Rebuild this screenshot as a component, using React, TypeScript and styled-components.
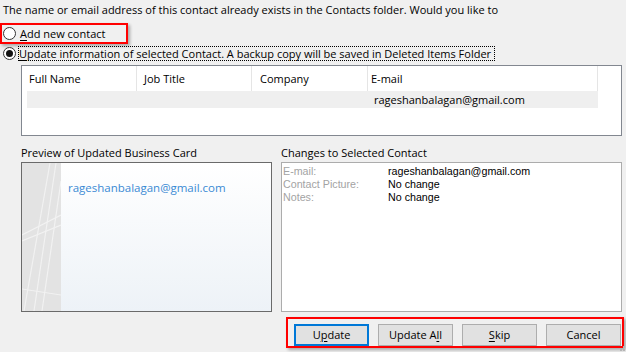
import React from "react";
import styled, { createGlobalStyle } from "styled-components";

const GlobalStyle = createGlobalStyle`
  html, body {
    margin: 0;
    padding: 0;
    background: #f0f0f0;
  }
`;

const Dialog = styled.div`
  position: relative;
  width: 626px;
  height: 352px;
  overflow: hidden;
  background: #f0f0f0;
  color: #000;
  font: 11px/16px "Open Sans", "Noto Sans", sans-serif;
  display: flex;
  flex-direction: column;
`;

const Prompt = styled.div`
  padding: 2px 0 0 3px;
  height: 16px;
  white-space: nowrap;
`;

const Highlight = styled.div<{ $w: number; $h: number }>`
  box-sizing: border-box;
  width: ${(p) => p.$w}px;
  height: ${(p) => p.$h}px;
  border: 2px solid #ff0000;
  box-shadow: 2px 2px 3px rgba(0, 0, 0, 0.3);
`;

const OptionRow = styled.label`
  display: flex;
  align-items: center;
  height: 17px;
  padding-left: 1px;
  white-space: nowrap;
`;

const SecondRow = styled(OptionRow)`
  margin-top: 2px;
  height: 15px;
  padding-left: 3px;
`;

const Radio = styled.span<{ $checked?: boolean }>`
  box-sizing: border-box;
  width: 13px;
  height: 13px;
  border-radius: 50%;
  border: 1px solid #333;
  background: #fff;
  display: flex;
  align-items: center;
  justify-content: center;
  flex: none;

  &::after {
    content: "";
    width: 7px;
    height: 7px;
    border-radius: 50%;
    background: ${(p) => (p.$checked ? "#111" : "transparent")};
  }
`;

const OptionText = styled.span<{ $focus?: boolean }>`
  margin-left: ${(p) => (p.$focus ? 2 : 3)}px;
  line-height: 13px;
  border: 1px dotted ${(p) => (p.$focus ? "#000" : "transparent")};
  padding: 0 ${(p) => (p.$focus ? 3 : 1)}px 0 0;
`;

const Key = styled.span`
  text-decoration: underline;
  text-underline-offset: 2px;
`;

const ListBox = styled.div`
  box-sizing: border-box;
  margin: 4px 0 0 21px;
  width: 601px;
  height: 71px;
  border: 1px solid #828790;
  background: #fff;
`;

const ListHeader = styled.div`
  display: grid;
  grid-template-columns: 115px 115px 116px 230px;
  height: 25px;
`;

const HeaderCell = styled.div<{ $pad: number }>`
  display: flex;
  align-items: center;
  padding-left: ${(p) => p.$pad}px;
  border-right: 1px solid #e5e5e5;
`;

const ListRow = styled.div`
  display: grid;
  grid-template-columns: 341px 230px;
  margin-left: 5px;
  width: 571px;
  height: 17px;
  background: #efefef;
  line-height: 17px;
`;

const RowCell = styled.div<{ $pad?: number }>`
  padding-left: ${(p) => p.$pad ?? 0}px;
`;

const LabelRow = styled.div`
  display: flex;
  margin-top: 10px;
  height: 16px;
  line-height: 14px;
`;

const SectionLabel = styled.div<{ $w: number; $ml: number }>`
  width: ${(p) => p.$w}px;
  margin-left: ${(p) => p.$ml}px;
`;

const Panels = styled.div`
  display: flex;
  gap: 9px;
  padding-left: 21px;
  height: 150px;
`;

const Card = styled.div`
  box-sizing: border-box;
  width: 251px;
  height: 150px;
  border: 1px solid #6a6a6a;
  display: flex;
  background: linear-gradient(#ffffff, #edf2f7);
`;

const CardStrip = styled.div`
  width: 39px;
  flex: none;
  background: #e3e3e3;
`;

const CardBody = styled.div`
  padding: 17px 0 0 7px;
  color: #3a8ad4;
  font-size: 11.5px;
`;

const ChangesBox = styled.div`
  box-sizing: border-box;
  width: 341px;
  height: 150px;
  border: 1px solid #acacac;
  background: #fff;
  padding: 2px 0 0 1px;
  font: 10.7px/13px "Liberation Sans", Arial, sans-serif;
  display: grid;
  grid-template-columns: 105px 1fr;
  align-content: start;
`;

const ChangeLabel = styled.div`
  color: #a3a3a3;
`;

const ChangeValue = styled.div`
  color: #000;
`;

const ButtonBar = styled(Highlight)`
  margin: 5px 0 0 286px;
  display: flex;
  gap: 9px;
  padding: 5px 0 0 6px;
`;

const Button = styled.button<{ $default?: boolean }>`
  box-sizing: border-box;
  width: 75px;
  height: 22px;
  padding: 0;
  background: #e1e1e1;
  border: ${(p) => (p.$default ? "2px solid #0078d7" : "1px solid #adadad")};
  font: inherit;
  line-height: 18px;
  color: #000;
`;

const Grip = styled.svg`
  position: absolute;
  right: 0;
  bottom: 0;
`;

const columns = [
  { name: "Full Name", pad: 7 },
  { name: "Job Title", pad: 7 },
  { name: "Company", pad: 8 },
  { name: "E-mail", pad: 3 },
];

const changes = [
  ["E-mail:", "rageshanbalagan@gmail.com"],
  ["Contact Picture:", "No change"],
  ["Notes:", "No change"],
];

const CardArt = () => (
  <svg width="39" height="148" viewBox="0 0 39 148">
    <g stroke="#f7f7f7" strokeWidth="1.2" fill="none" opacity="0.75">
      <line x1="34" y1="0" x2="12" y2="148" />
      <line x1="39" y1="18" x2="20" y2="148" />
      <line x1="28" y1="0" x2="2" y2="148" />
      <line x1="0" y1="72" x2="39" y2="52" />
      <line x1="0" y1="78" x2="39" y2="62" />
      <line x1="0" y1="126" x2="39" y2="132" />
    </g>
  </svg>
);

export default function App() {
  return (
    <>
      <GlobalStyle />
      <Dialog>
        <Prompt>
          The name or email address of this contact already exists in the
          Contacts folder. Would you like to
        </Prompt>

        <Highlight $w={128} $h={21} style={{ marginTop: 5 }}>
          <OptionRow>
            <Radio />
            <OptionText>
              <Key>A</Key>dd new contact
            </OptionText>
          </OptionRow>
        </Highlight>

        <SecondRow>
          <Radio $checked />
          <OptionText $focus>
            <Key>U</Key>pdate information of selected Contact. A backup copy
            will be saved in Deleted Items Folder
          </OptionText>
        </SecondRow>

        <ListBox>
          <ListHeader>
            {columns.map((c) => (
              <HeaderCell key={c.name} $pad={c.pad}>
                {c.name}
              </HeaderCell>
            ))}
          </ListHeader>
          <ListRow>
            <RowCell />
            <RowCell $pad={6}>rageshanbalagan@gmail.com</RowCell>
          </ListRow>
        </ListBox>

        <LabelRow>
          <SectionLabel $w={260} $ml={21}>
            Preview of Updated Business Card
          </SectionLabel>
          <SectionLabel $w={300} $ml={0}>
            Changes to Selected Contact
          </SectionLabel>
        </LabelRow>

        <Panels>
          <Card>
            <CardStrip>
              <CardArt />
            </CardStrip>
            <CardBody>rageshanbalagan@gmail.com</CardBody>
          </Card>
          <ChangesBox>
            {changes.map(([label, value]) => (
              <React.Fragment key={label}>
                <ChangeLabel>{label}</ChangeLabel>
                <ChangeValue>{value}</ChangeValue>
              </React.Fragment>
            ))}
          </ChangesBox>
        </Panels>

        <ButtonBar as="div" $w={338} $h={31}>
          <Button $default>
            U<Key>p</Key>date
          </Button>
          <Button>
            Update A<Key>l</Key>l
          </Button>
          <Button>
            <Key>S</Key>kip
          </Button>
          <Button>Cancel</Button>
        </ButtonBar>

        <Grip width="8" height="6" viewBox="0 0 8 6">
          <g fill="#b5b5b5">
            <rect x="5" y="0" width="2" height="2" />
            <rect x="2" y="3" width="2" height="2" />
            <rect x="5" y="3" width="2" height="2" />
          </g>
        </Grip>
      </Dialog>
    </>
  );
}
